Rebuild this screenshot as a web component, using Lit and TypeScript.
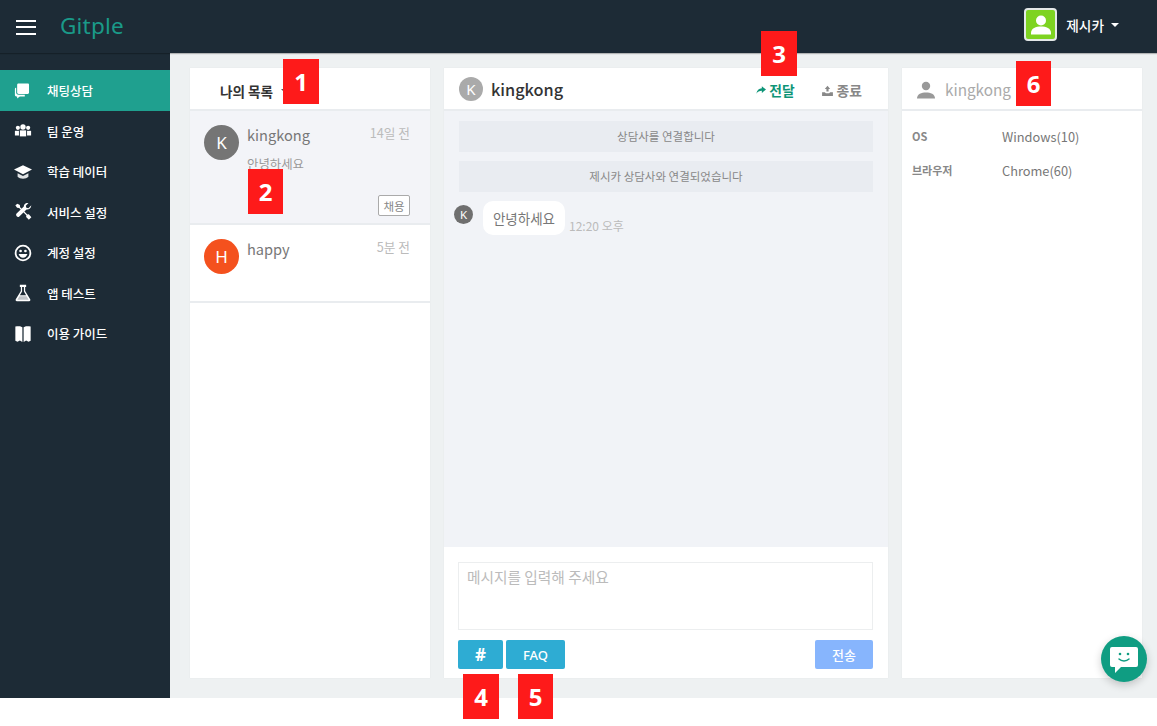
import { LitElement, html, css, svg } from "lit";
import { customElement } from "lit/decorators.js";

const NAV: [string, string][] = [
  ["chat", "채팅상담"],
  ["team", "팀 운영"],
  ["grad", "학습 데이터"],
  ["tools", "서비스 설정"],
  ["smile", "계정 설정"],
  ["flask", "앱 테스트"],
  ["book", "이용 가이드"],
];

const MARKS: [string, number, number, boolean][] = [
  ["1", 283, 59, false],
  ["2", 248, 169, true],
  ["3", 761, 31, false],
  ["4", 463, 674, false],
  ["5", 518, 674, true],
  ["6", 1016, 61, true],
];

const ICONS: Record<string, unknown> = {
  chat: svg`<path d="M1 8c0-1 .7-1.500 1.500-1.500H12v9.500H6.500l-3 2.300V16H2.500C1.700 16 1 15.300 1 14.500z"/><path fill="#1fa08f" d="M2.400 3.200C2.700 1.700 3.700.8 5.200.8h10c1.500 0 2.500 1 2.500 2.500v8.400c0 1.500-1 2.500-2.500 2.500H5.200c-1.500 0-2.800-1-2.800-2.500z"/><path d="M3.500 3.300c0-1 .7-1.500 1.700-1.500h10c1 0 1.500.5 1.500 1.500v8.400c0 1-.5 1.500-1.500 1.500h-10c-1 0-1.700-.5-1.700-1.500z"/>`,
  team: svg`<circle cx="10" cy="5.500" r="3"/><path d="M6.500 9.300h7V16h-7z"/><circle cx="4.300" cy="6.500" r="2.300"/><path d="M1 9.800h4.500V15H1z"/><circle cx="15.700" cy="6.500" r="2.300"/><path d="M14.500 9.800H19V15h-4.500z"/>`,
  grad: svg`<path d="M10 2.500 20 7.300 10 12.500 0 7.300z"/><path fill="#dfe2e4" d="M4 11.300v4c2.500 2.800 9.500 2.800 12 0v-4l-6 3.200z"/>`,
  tools: svg`<path d="M1.500 2.500 3.800.8l2.700 1.500.3 2.300 8 8.200 1.700-.3 2.800 3.200-2.800 2.800-3-3 .2-1.800-8-8.100-2.300-.3z"/><path d="M19 2.800l-3 3-2.300-.6-.6-2.200 3-3c-2.500-.6-5.200 1-5.200 3.800l-8 8c-1.700 1.700.9 5.300 3 3.300l8-8c2.800.4 5.800-1.800 5.100-5.100z"/>`,
  flask: svg`<path d="M6.500.8h7v2.400h-1.100v4.500l5.600 9.200c.6 1 0 2.300-1.200 2.300H3.200c-1.200 0-1.800-1.300-1.200-2.300l5.600-9.200V3.200H6.500z"/><path fill="#1d2b36" d="M9 3.200h2V8.300l2.500 4.200H6.500L9 8.300z"/><path fill="#bfc3c7" d="M6 13.500h8l2.300 4H3.700z"/>`,
  book: svg`<path d="M1.500 1.800c3.200-.8 6.500-.6 7.800.8v16.200l-2.800-1.600-2.600 1.300-2.400-.9z"/><path d="M18.500 1.800c-3.200-.8-6.500-.6-7.800.8v16.200l2.800-1.600 2.600 1.300 2.400-.9z"/>`,
};

@customElement("app-root")
export class AppRoot extends LitElement {
  static styles = css`
    :host {
      display: block;
      width: 1157px;
      height: 726px;
      position: relative;
      overflow: hidden;
      background: #fff;
      font-family: "Noto Sans CJK KR", "Noto Sans", sans-serif;
      color: #676a6c;
    }
    .top {
      height: 53px;
      background: #1d2b36;
      display: flex;
      align-items: center;
      box-shadow: 0 1px 1px rgba(0, 0, 0, 0.25);
      position: relative;
    }
    .burger {
      width: 20px;
      height: 15px;
      margin: 1px 0 0 16px;
      border-top: 2px solid #fff;
      border-bottom: 2px solid #fff;
      position: relative;
      box-sizing: border-box;
    }
    .burger::after {
      content: "";
      position: absolute;
      left: 0;
      right: 0;
      top: 4.5px;
      height: 2px;
      background: #fff;
    }
    .logo {
      margin-left: 24px;
      margin-top: -3px;
      font-family: "Noto Sans", sans-serif;
      font-size: 22.5px;
      color: #1a9a89;
      letter-spacing: 0.2px;
    }
    .user {
      margin-left: auto;
      margin-right: 38px;
      margin-top: -4px;
      display: flex;
      align-items: center;
      color: #fff;
      font-size: 13.7px;
      font-weight: 500;
    }
    .ava {
      width: 33px;
      height: 33px;
      box-sizing: border-box;
      border: 2px solid #e4e8e8;
      border-radius: 4px;
      background: #7ed321;
      margin-right: 9px;
      display: flex;
      align-items: center;
      justify-content: center;
    }
    .caret {
      width: 0;
      height: 0;
      margin-left: 7px;
      border-left: 4px solid transparent;
      border-right: 4px solid transparent;
      border-top: 4px solid #fff;
    }
    .main {
      display: flex;
      height: 645px;
    }
    .side {
      width: 170px;
      flex: none;
      background: #1d2b36;
      padding-top: 17px;
      box-sizing: border-box;
    }
    .nav {
      height: 40.5px;
      box-sizing: border-box;
      padding-top: 1px;
      display: flex;
      align-items: center;
      padding-left: 14px;
      color: #fff;
      font-size: 12.5px;
      font-weight: 500;
    }
    .nav.on {
      background: #1fa08f;
    }
    .nav svg {
      width: 18px;
      height: 18px;
      margin-right: 15px;
      fill: #fff;
      flex: none;
    }
    .content {
      flex: 1;
      background: #eef1f2;
      padding: 15px 15px 20px 20px;
      display: flex;
      gap: 14px;
    }
    .panel {
      background: #fff;
      box-shadow: 0 0 1px rgba(0, 0, 0, 0.08);
      display: flex;
      flex-direction: column;
      min-width: 0;
    }
    .p-list,
    .p-info {
      width: 240px;
      flex: none;
    }
    .p-chat {
      width: 444px;
      flex: none;
    }
    .head {
      height: 41px;
      flex: none;
      border-bottom: 2px solid #e9ecef;
      display: flex;
      align-items: center;
    }
    .list-title {
      margin-left: 30px;
      font-size: 13.6px;
      font-weight: 700;
      color: #333;
      display: flex;
      align-items: center;
      margin-top: 4px;
    }
    .list-title i {
      width: 0;
      height: 0;
      margin-left: 8px;
      border-left: 3.5px solid transparent;
      border-right: 3.5px solid transparent;
      border-top: 3.5px solid #555;
    }
    .item {
      display: flex;
      padding: 14px 20px 0 14px;
      border-bottom: 2px solid #e9ecef;
      box-sizing: border-box;
      position: relative;
    }
    .item.sel {
      background: #f3f4f8;
      height: 114px;
    }
    .item.plain {
      height: 78px;
    }
    .circle {
      width: 35px;
      height: 35px;
      border-radius: 50%;
      color: #fff;
      display: flex;
      align-items: center;
      justify-content: center;
      font-family: "Noto Sans", sans-serif;
      font-size: 17px;
      flex: none;
    }
    .info {
      margin-left: 8px;
      flex: 1;
      min-width: 0;
    }
    .name {
      font-size: 14.6px;
      line-height: 22px;
      color: #777;
      margin-top: -1px;
    }
    .preview {
      font-size: 12.4px;
      line-height: 18px;
      color: #999;
      margin-top: 9px;
    }
    .time {
      font-size: 12.7px;
      color: #bbb;
      line-height: 18px;
      flex: none;
      margin-top: -1px;
    }
    .tag {
      position: absolute;
      right: 20px;
      bottom: 7px;
      width: 32px;
      height: 21px;
      box-sizing: border-box;
      border: 1px solid #aaa;
      border-radius: 2px;
      font-size: 11.5px;
      color: #888;
      display: flex;
      align-items: center;
      justify-content: center;
      background: #fff;
    }
    .chat-head {
      padding: 0 26px 0 15px;
    }
    .chat-head .circle {
      width: 24px;
      height: 24px;
      font-size: 15px;
      background: #aaa;
      margin-right: 8px;
    }
    .chat-name {
      font-size: 16.3px;
      font-weight: 500;
      color: #333;
      flex: 1;
    }
    .act {
      display: flex;
      align-items: center;
      font-size: 13.8px;
      font-weight: 700;
      margin-top: 3px;
    }
    .act svg {
      width: 10px;
      height: 10px;
      margin-right: 3px;
    }
    .act.go {
      color: #0e9578;
      margin-right: 26px;
    }
    .act.go svg {
      fill: #0e9578;
    }
    .act.end {
      color: #888;
    }
    .act.end svg {
      fill: #888;
      width: 13px;
      height: 13px;
    }
    .msgs {
      flex: 1;
      background: #f1f3f7;
      padding: 10px 15px 0;
      display: flex;
      flex-direction: column;
      gap: 9px;
    }
    .sys {
      height: 31px;
      box-sizing: border-box;
      padding-bottom: 1px;
      background: #e9ecf1;
      font-size: 11.5px;
      color: #888;
      display: flex;
      align-items: center;
      justify-content: center;
    }
    .msg {
      display: flex;
      align-items: flex-start;
      margin-left: -5px;
    }
    .msg .circle {
      width: 19px;
      height: 19px;
      font-size: 11.5px;
      background: #6f6f6f;
      margin: 4px 10px 0 0;
    }
    .bubble {
      background: #fff;
      border-radius: 10px;
      height: 34px;
      width: 82px;
      font-size: 13.5px;
      color: #777;
      display: flex;
      align-items: center;
      justify-content: center;
    }
    .msg-time {
      font-size: 12px;
      color: #bbb;
      margin: 17px 0 0 4px;
      line-height: 16px;
    }
    .compose {
      height: 131px;
      flex: none;
      padding: 15px 15px 0 14px;
      box-sizing: border-box;
    }
    .input {
      height: 68px;
      box-sizing: border-box;
      border: 1px solid #eceeef;
      padding: 4px 8px;
      font-size: 14.7px;
      line-height: 20px;
      color: #bbb;
    }
    .btns {
      display: flex;
      gap: 3px;
      margin-top: 10px;
    }
    .btn {
      height: 29px;
      border-radius: 2px;
      background: #2eacd3;
      color: #fff;
      font-size: 13px;
      font-weight: 500;
      display: flex;
      align-items: center;
      justify-content: center;
      font-family: "Noto Sans", "Noto Sans CJK KR", sans-serif;
    }
    .b1 {
      width: 45px;
      font-size: 17px;
      font-weight: 700;
    }
    .b2 {
      width: 59px;
    }
    .b3 {
      width: 58px;
      margin-left: auto;
      background: #87b5fd;
      font-family: "Noto Sans CJK KR", sans-serif;
    }
    .info-head {
      padding-left: 14px;
    }
    .info-head svg {
      width: 20px;
      height: 20px;
      fill: #999;
      margin-right: 9px;
      margin-top: 2px;
    }
    .info-name {
      font-size: 15.3px;
      color: #aaa;
      margin-top: 1px;
    }
    .rows {
      padding: 16px 0 0 10px;
    }
    .row {
      display: flex;
      align-items: center;
      height: 34px;
      margin-top: -8px;
      margin-bottom: 8px;
      font-size: 12.8px;
    }
    .row b {
      width: 90px;
      font-size: 11px;
      font-weight: 700;
      color: #888;
    }
    .row span {
      color: #777;
    }
    .mark {
      position: absolute;
      width: 36px;
      height: 45px;
      background: #fe1a1a;
      color: #fff;
      font-family: "Open Sans", sans-serif;
      font-size: 24px;
      font-weight: 700;
      display: flex;
      align-items: center;
      justify-content: center;
    }
    .mark.narrow {
      width: 35px;
    }
    .fab {
      position: absolute;
      left: 1101px;
      top: 636px;
      width: 46px;
      height: 46px;
      border-radius: 50%;
      background: #0f9d82;
      box-shadow: 0 3px 8px rgba(0, 0, 0, 0.2);
      display: flex;
      align-items: center;
      justify-content: center;
    }
    .fab svg {
      width: 30px;
      height: 30px;
      margin-top: 4px;
    }
  `;

  private icon(k: string) {
    if (k === "smile") {
      return html`<svg viewBox="0 0 20 20">
        <path fill-rule="evenodd" d="M10 .8a9.200 9.200 0 1 0 0 18.400 9.200 9.200 0 0 0 0-18.400zm0 2a7.200 7.200 0 1 1 0 14.400 7.200 7.200 0 0 1 0-14.400z"/>
        <circle cx="7.300" cy="7.800" r="1.500"/><circle cx="12.700" cy="7.800" r="1.500"/>
        <path d="M5.200 11h9.600c-.5 2.800-2.500 4.200-4.800 4.200S5.700 13.800 5.200 11z"/>
      </svg>`;
    }
    return html`<svg viewBox="0 0 20 20">${ICONS[k]}</svg>`;
  }

  render() {
    return html`
      <div class="top">
        <div class="burger"></div>
        <div class="logo">Gitple</div>
        <div class="user">
          <div class="ava">
            <svg width="24" height="25" viewBox="0 0 24 25" fill="#fff">
              <circle cx="12" cy="8.500" r="5"/>
              <path d="M2 21c0-5 5-6.500 10-6.500S22 16 22 21v1.500H2z"/>
            </svg>
          </div>
          제시카
          <span class="caret"></span>
        </div>
      </div>
      <div class="main">
        <div class="side">
          ${NAV.map(
            ([k, t], i) => html`<div class="nav ${i === 0 ? "on" : ""}">${this.icon(k)}${t}</div>`
          )}
        </div>
        <div class="content">
          <div class="panel p-list">
            <div class="head"><div class="list-title">나의 목록<i></i></div></div>
            <div class="item sel">
              <div class="circle" style="background:#757575">K</div>
              <div class="info">
                <div class="name">kingkong</div>
                <div class="preview">안녕하세요</div>
              </div>
              <div class="time">14일 전</div>
              <div class="tag">채용</div>
            </div>
            <div class="item plain">
              <div class="circle" style="background:#f4511e">H</div>
              <div class="info"><div class="name">happy</div></div>
              <div class="time">5분 전</div>
            </div>
          </div>
          <div class="panel p-chat">
            <div class="head chat-head">
              <div class="circle">K</div>
              <div class="chat-name">kingkong</div>
              <div class="act go">
                <svg viewBox="0 0 12 12"><path d="M7 1.500 12 5.500 7 9.500V7C4 7 2 8 .5 10.500 1 6.500 3.500 4 7 4z"/></svg>전달
              </div>
              <div class="act end">
                <svg viewBox="0 0 12 12"><path d="M6 1.500 8.500 4.500H7V7H5V4.500H3.500z"/><path d="M1 7.500h2.500l1 1h3l1-1H11V11H1z"/></svg>종료
              </div>
            </div>
            <div class="msgs">
              <div class="sys">상담사를 연결합니다</div>
              <div class="sys">제시카 상담사와 연결되었습니다</div>
              <div class="msg">
                <div class="circle">K</div>
                <div class="bubble">안녕하세요</div>
                <div class="msg-time">12:20 오후</div>
              </div>
            </div>
            <div class="compose">
              <div class="input">메시지를 입력해 주세요</div>
              <div class="btns">
                <div class="btn b1">#</div>
                <div class="btn b2">FAQ</div>
                <div class="btn b3">전송</div>
              </div>
            </div>
          </div>
          <div class="panel p-info">
            <div class="head info-head">
              <svg viewBox="0 0 20 20">
                <circle cx="10" cy="6" r="4.200"/>
                <path d="M1 18.500c0-4.500 4.500-6 9-6s9 1.500 9 6z"/>
              </svg>
              <div class="info-name">kingkong</div>
            </div>
            <div class="rows">
              <div class="row"><b>OS</b><span>Windows(10)</span></div>
              <div class="row"><b>브라우저</b><span>Chrome(60)</span></div>
            </div>
          </div>
        </div>
      </div>
      ${MARKS.map(
        ([t, x, y, n]) =>
          html`<div class="mark ${n ? "narrow" : ""}" style="left:${x}px;top:${y}px">${t}</div>`
      )}
      <div class="fab">
        <svg viewBox="0 0 30 30">
          <path fill="#fff" d="M3 1h24a2 2 0 0 1 2 2v16a2 2 0 0 1-2 2H12l-6 6v-6H3a2 2 0 0 1-2-2V3a2 2 0 0 1 2-2z"/>
          <circle cx="11" cy="8" r="1.300" fill="#0f9d82"/>
          <circle cx="19" cy="8" r="1.300" fill="#0f9d82"/>
          <path d="M10 13c2.500 2.500 7.500 2.500 10 0" fill="none" stroke="#0f9d82" stroke-width="1.500" stroke-linecap="round"/>
        </svg>
      </div>
    `;
  }
}
